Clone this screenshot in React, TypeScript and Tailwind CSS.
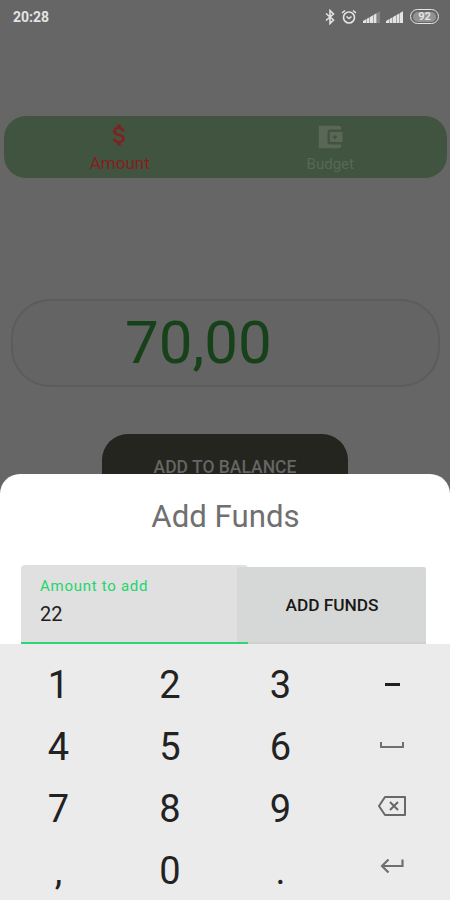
import type { ReactNode } from 'react';

function StatusBar() {
  return (
    <header className="flex h-8 items-center justify-between pl-[13px] pr-[11px] pt-px text-[#e4e4e4]">
      <span className="text-[14px] font-bold leading-none">20:28</span>
      <div className="flex items-center">
        <svg width="10" height="16" viewBox="0 0 10 16" fill="none" stroke="currentColor" strokeWidth="1.6">
          <path d="M1 4.500 8.500 11 5 14.500V1.500L8.500 5 1 11.500" />
        </svg>
        <svg className="ml-1.5" width="16" height="16" viewBox="0 0 16 16" fill="none" stroke="currentColor" strokeWidth="1.6">
          <circle cx="8" cy="8.500" r="5.500" />
          <path d="M1 4 4 1.500M15 4 12 1.500M5.500 7.500 8 9.500 10.500 7.500" />
        </svg>
        <svg className="ml-1.5" width="18" height="14" viewBox="0 0 18 14" fill="currentColor">
          <path d="M0 13v-2l3-1.700V13zM3.500 13V9l3-1.700V13zM7 13V7l3-1.700V13zM10.500 13V5l3-1.700V13z" />
          <path d="M14 13V3l3-1.700V13z" opacity=".25" />
        </svg>
        <svg className="ml-[5px]" width="18" height="14" viewBox="0 0 18 14" fill="currentColor">
          <path d="M0 13v-2l3-1.700V13zM3.500 13V9l3-1.700V13zM7 13V7l3-1.700V13zM10.500 13V5l3-1.700V13zM14 13V3l3-1.700V13z" />
        </svg>
        <span className="ml-[6px] flex h-[15px] w-[29px] items-center justify-center rounded-full border-[1.500px] border-current">
          <span className="flex h-[10px] w-[23px] items-center justify-center rounded-full bg-[#929292] text-[11px] font-bold leading-none">92</span>
        </span>
      </div>
    </header>
  );
}

function TopTabs() {
  return (
    <nav className="ml-1 mr-[3px] mt-[83.500px] grid h-[62.500px] grid-cols-2 rounded-[22px] bg-[#41543f]">
      <div className="flex flex-col items-center pl-[10px] pt-[5px] text-[#831f20]">
        <svg width="29" height="28" viewBox="0 0 24 24" fill="currentColor">
          <path d="M11.800 10.900c-2.270-.59-3-1.200-3-2.150 0-1.090 1.010-1.850 2.700-1.850 1.780 0 2.440.85 2.500 2.100h2.210c-.07-1.720-1.120-3.300-3.210-3.810V3h-3v2.160c-1.940.42-3.500 1.680-3.500 3.610 0 2.310 1.910 3.460 4.700 4.130 2.500.6 3 1.480 3 2.410 0 .69-.49 1.790-2.700 1.790-2.060 0-2.870-.92-2.980-2.100h-2.200c.12 2.190 1.760 3.420 3.680 3.830V21h3v-2.150c1.950-.37 3.500-1.500 3.500-3.550 0-2.840-2.430-3.810-4.700-4.400z" />
        </svg>
        <span className="mt-[4px] text-[17px] leading-5">Amount</span>
      </div>
      <div className="flex flex-col items-center pr-[12px] pt-[6px] text-[#596856]">
        <svg width="30" height="30" viewBox="0 0 24 24" fill="currentColor">
          <path d="M21 18v1c0 1.100-.9 2-2 2H3V3h16c1.100 0 2 .9 2 2v1h-9c-1.110 0-2 .9-2 2v8c0 1.100.89 2 2 2h9zm-9-2h10V8H12v8zm4-2.500c-.83 0-1.500-.67-1.500-1.500s.67-1.500 1.500-1.500 1.500.67 1.500 1.500-.67 1.500-1.500 1.500z" />
        </svg>
        <span className="mt-[2px] text-[15px] leading-5">Budget</span>
      </div>
    </nav>
  );
}

function Key({ children }: { children: ReactNode }) {
  return <button className="flex items-center justify-center">{children}</button>;
}

function SpaceIcon() {
  return (
    <svg className="mb-[3px]" width="26" height="8" viewBox="0 0 26 8" fill="none" stroke="#707070" strokeWidth="2">
      <path d="M2 1v5h22V1" />
    </svg>
  );
}

function DeleteIcon() {
  return (
    <svg className="mb-[4px]" width="30" height="22" viewBox="0 0 30 22" fill="none" stroke="#686868" strokeWidth="2">
      <path d="M8 2h20v18H8L2 11z" strokeLinejoin="round" />
      <path d="m13 7 8 8m0-8-8 8" />
    </svg>
  );
}

function EnterIcon() {
  return (
    <svg className="mb-[8px]" width="26" height="16" viewBox="0 0 26 16" fill="none" stroke="#707070" strokeWidth="2.200">
      <path d="M23.500 1.500V8H3M9.500 1.500 3 8l6.500 6.500" />
    </svg>
  );
}

const digitClass = 'pt-px text-[38px] leading-none text-[#222222]';

function Keypad() {
  return (
    <div className="grid h-[256px] grid-cols-[113px_110px_111px_112px] grid-rows-[62px_62px_62px_62px] bg-[#ebebeb] pl-[2px] pt-[9px]">
      <Key><span className={digitClass}>1</span></Key>
      <Key><span className={digitClass}>2</span></Key>
      <Key><span className={digitClass}>3</span></Key>
      <Key><span className="h-[3px] w-[15px] bg-[#202020]" /></Key>
      <Key><span className={digitClass}>4</span></Key>
      <Key><span className={digitClass}>5</span></Key>
      <Key><span className={digitClass}>6</span></Key>
      <Key><SpaceIcon /></Key>
      <Key><span className={digitClass}>7</span></Key>
      <Key><span className={digitClass}>8</span></Key>
      <Key><span className={digitClass}>9</span></Key>
      <Key><DeleteIcon /></Key>
      <Key><span className={digitClass}>,</span></Key>
      <Key><span className={digitClass}>0</span></Key>
      <Key><span className={digitClass}>.</span></Key>
      <Key><EnterIcon /></Key>
    </div>
  );
}

function AddFundsSheet() {
  return (
    <section className="absolute inset-x-0 bottom-0 h-[426px] overflow-hidden rounded-t-[20px] bg-white">
      <div className="flex h-[170px] flex-col">
        <h1 className="pl-px pt-[24px] text-center text-[31.200px] leading-[38px] text-[#707070]">Add Funds</h1>
        <div className="ml-[21px] mt-[29px] flex h-[79px]">
          <label className="h-[79px] w-[227px] rounded-t-[4px] border-b-2 border-[#2ed573] bg-[#e0e0e0] pl-[19px] pt-[12px]">
            <span className="block text-[15px] leading-[18px] tracking-[0.720px] text-[#22d56d]">Amount to add</span>
            <span className="mt-[7px] block text-[20px] leading-6 text-[#202020]">22</span>
          </label>
          <div className="-ml-[11px] flex h-[79px] w-[189px] flex-col pt-[2px]">
            <button className="h-[75px] rounded-t-[2px] bg-[#d6d8d7] pl-[1px] pt-[2px] text-[17.300px] font-medium text-[#181818]">ADD FUNDS</button>
            <div className="ml-[11px] h-[2px] bg-[#cfd1d0]" />
          </div>
        </div>
      </div>
      <Keypad />
    </section>
  );
}

export default function App() {
  return (
    <main className="relative h-[900px] w-[450px] overflow-hidden bg-[#666666] font-['Roboto','Liberation_Sans',sans-serif]">
      <StatusBar />
      <TopTabs />
      <div className="ml-[11px] mr-[10px] mt-[121px] flex h-[88px] items-center rounded-[39px] border-2 border-[#5c5c5c] bg-[#646464]">
        <span className="pl-[112px] text-[60px] leading-none text-[#174219]">70,00</span>
      </div>
      <button className="ml-[102px] mt-[47px] flex h-[66px] w-[246px] items-center justify-center rounded-[26px] bg-[#24251f] text-[17.500px] font-medium text-[#656565]">
        ADD TO BALANCE
      </button>
      <AddFundsSheet />
    </main>
  );
}
